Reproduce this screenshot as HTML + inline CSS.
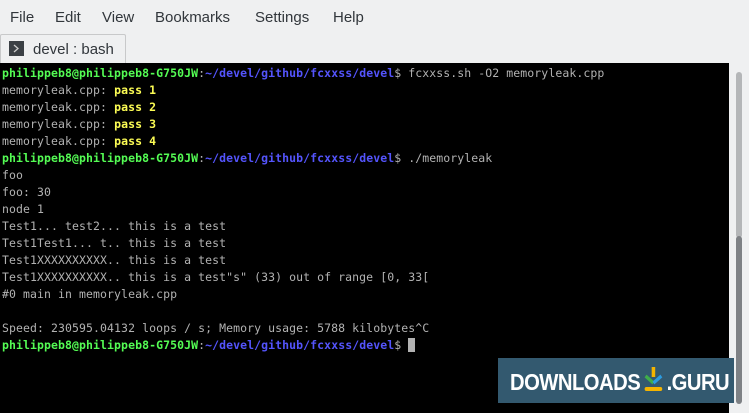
<!DOCTYPE html>
<html><head><style>
body{margin:0;width:749px;height:413px;overflow:hidden;background:#eff0f1;font-family:"Liberation Sans","DejaVu Sans",sans-serif;position:relative}
.menu{position:absolute;top:9px;left:0;font-size:15px;color:#31363b}
.menu span{position:absolute;white-space:nowrap}
.tab{position:absolute;left:0;top:34px;width:126px;height:30px;background:#eff0f1;border:1px solid #c8c9ca;border-bottom:none;border-radius:2px 2px 0 0;box-sizing:border-box}
.tab .ic{position:absolute;left:8px;top:6px;width:15px;height:15px;background:#3b4045}
.tab .t{position:absolute;left:32px;top:6px;font-size:15px;color:#31363b}
.term{position:absolute;left:0;top:63px;width:729px;height:350px;background:#000}
pre{margin:0;position:absolute;left:2px;top:2px;font-family:"DejaVu Sans Mono",monospace;font-size:11.5px;letter-spacing:0.08px;line-height:17px;color:#b2b2b2}
.g{color:#54fc54;font-weight:bold}.b{color:#5454fc;font-weight:bold}.y{color:#fcfc54;font-weight:bold}
.cur{display:inline-block;width:7px;height:14px;background:#b2b2b2;vertical-align:-3px}
.sb1{position:absolute;left:736px;top:72px;width:6px;height:166px;background:#b4b6b8;border-radius:3px}
.sb2{position:absolute;left:736px;top:236px;width:6px;height:168px;background:#7e8185;border-radius:3px}
.logo{position:absolute;left:498px;top:358px;width:236px;height:45px;background:#33596f;overflow:hidden}
.logo .t{position:absolute;left:12px;top:9px;font-size:23px;font-weight:bold;color:#fff;letter-spacing:-0.6px;white-space:nowrap;transform:scaleX(0.88);transform-origin:left}
</style></head><body>
<div class="menu"><span style="left:10px">File</span><span style="left:55px">Edit</span><span style="left:102px">View</span><span style="left:155px">Bookmarks</span><span style="left:255px">Settings</span><span style="left:333px">Help</span></div>
<div class="tab"><div class="ic"><svg width="15" height="15"><path d="M5 4l4 3.5L5 11" stroke="#ccc" fill="none" stroke-width="1.3"/></svg></div><div class="t">devel : bash</div></div>
<div class="term"><pre><span class="g">philippeb8@philippeb8-G750JW</span>:<span class="b">~/devel/github/fcxxss/devel</span>$ fcxxss.sh -O2 memoryleak.cpp
memoryleak.cpp: <span class="y">pass 1</span>
memoryleak.cpp: <span class="y">pass 2</span>
memoryleak.cpp: <span class="y">pass 3</span>
memoryleak.cpp: <span class="y">pass 4</span>
<span class="g">philippeb8@philippeb8-G750JW</span>:<span class="b">~/devel/github/fcxxss/devel</span>$ ./memoryleak
foo
foo: 30
node 1
Test1... test2... this is a test
Test1Test1... t.. this is a test
Test1XXXXXXXXXX.. this is a test
Test1XXXXXXXXXX.. this is a test"s" (33) out of range [0, 33[
#0 main in memoryleak.cpp

Speed: 230595.04132 loops / s; Memory usage: 5788 kilobytes^C
<span class="g">philippeb8@philippeb8-G750JW</span>:<span class="b">~/devel/github/fcxxss/devel</span>$ <span class="cur"></span></pre></div>
<div class="sb1"></div><div class="sb2"></div>
<div class="logo"><div class="t">DOWNLOADS<svg width="24" height="26" style="vertical-align:-3px;margin:0 3px"><rect x="10" y="0" width="4" height="10" fill="#f5b400"/><path d="M3 9l9 7" stroke="#3fae49" stroke-width="3.5"/><path d="M21 9l-9 7" stroke="#2c9be0" stroke-width="3.5"/><rect x="2" y="20" width="20" height="4" rx="2" fill="#f5b400"/></svg>.GURU</div></div>
</body></html>
